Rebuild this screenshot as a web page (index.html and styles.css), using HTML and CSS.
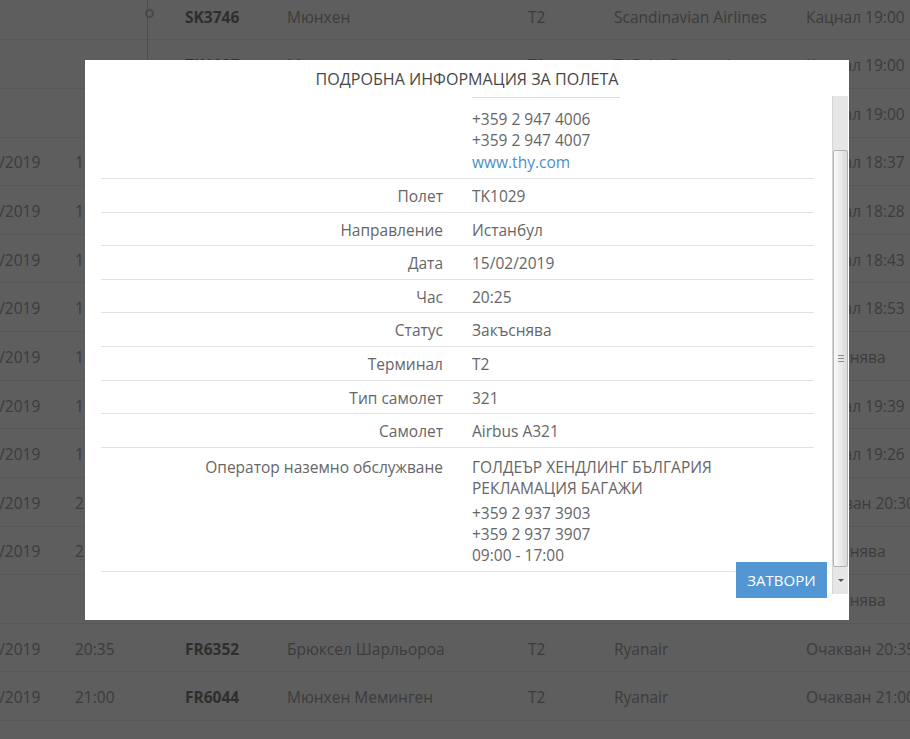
FILE: index.html
```html
<!DOCTYPE html>
<html lang="bg">
<head>
<meta charset="utf-8">
<title>Подробна информация за полета</title>
<link rel="stylesheet" href="styles.css">
</head>
<body>
<div class="board">
  <div class="flight-row"><span></span><span class="time"><i class="tl-line"></i><i class="tl-dot"></i></span><b>SK3746</b><span>Мюнхен</span><span>T2</span><span>Scandinavian Airlines</span><span>Кацнал 19:00</span></div>
  <div class="flight-row"><span></span><span class="time"><i class="tl-line"></i></span><b>TK1027</b><span>Мюнхен</span><span>T2</span><span>TAP Air Portugal</span><span>Кацнал 19:00</span></div>
  <div class="flight-row"><span></span><span class="time"><i class="tl-line"></i></span><b></b><span></span><span></span><span></span><span>Кацнал 19:00</span></div>
  <div class="flight-row"><span>15/02/2019</span><span class="time">1</span><b></b><span></span><span></span><span></span><span>Кацнал 18:37</span></div>
  <div class="flight-row"><span>15/02/2019</span><span class="time">1</span><b></b><span></span><span></span><span></span><span>Кацнал 18:28</span></div>
  <div class="flight-row"><span>15/02/2019</span><span class="time">1</span><b></b><span></span><span></span><span></span><span>Кацнал 18:43</span></div>
  <div class="flight-row"><span>15/02/2019</span><span class="time">1</span><b></b><span></span><span></span><span></span><span>Кацнал 18:53</span></div>
  <div class="flight-row"><span>15/02/2019</span><span class="time">1</span><b></b><span></span><span></span><span></span><span>Закъснява</span></div>
  <div class="flight-row"><span>15/02/2019</span><span class="time">1</span><b></b><span></span><span></span><span></span><span>Кацнал 19:39</span></div>
  <div class="flight-row"><span>15/02/2019</span><span class="time">1</span><b></b><span></span><span></span><span></span><span>Кацнал 19:26</span></div>
  <div class="flight-row"><span>15/02/2019</span><span class="time">2</span><b></b><span></span><span></span><span></span><span>Очакван 20:30</span></div>
  <div class="flight-row"><span>15/02/2019</span><span class="time">2</span><b></b><span></span><span></span><span></span><span>Закъснява</span></div>
  <div class="flight-row"><span></span><span class="time"></span><b></b><span></span><span></span><span></span><span>Закъснява</span></div>
  <div class="flight-row"><span>15/02/2019</span><span class="time">20:35</span><b>FR6352</b><span>Брюксел Шарльороа</span><span>T2</span><span>Ryanair</span><span>Очакван 20:35</span></div>
  <div class="flight-row"><span>15/02/2019</span><span class="time">21:00</span><b>FR6044</b><span>Мюнхен Меминген</span><span>T2</span><span>Ryanair</span><span>Очакван 21:00</span></div>
  <div class="flight-row"><span></span><span class="time"></span><b></b><span></span><span></span><span></span><span></span></div>
</div>

<div class="overlay"></div>

<div class="modal">
  <div class="modal-title">Подробна информация за полета</div>
  <div class="modal-body">
    <div class="details">
      <div class="info-row partial">
        <div class="info-label"></div>
        <div class="info-value">
          <div class="sep"></div>
          <div class="lines">
            <div>+359 2 947 4006</div>
            <div>+359 2 947 4007</div>
            <div><a href="#">www.thy.com</a></div>
          </div>
        </div>
      </div>
      <div class="info-row"><div class="info-label">Полет</div><div class="info-value">TK1029</div></div>
      <div class="info-row"><div class="info-label">Направление</div><div class="info-value">Истанбул</div></div>
      <div class="info-row"><div class="info-label">Дата</div><div class="info-value">15/02/2019</div></div>
      <div class="info-row"><div class="info-label">Час</div><div class="info-value">20:25</div></div>
      <div class="info-row"><div class="info-label">Статус</div><div class="info-value">Закъснява</div></div>
      <div class="info-row"><div class="info-label">Терминал</div><div class="info-value">T2</div></div>
      <div class="info-row"><div class="info-label">Тип самолет</div><div class="info-value">321</div></div>
      <div class="info-row"><div class="info-label">Самолет</div><div class="info-value">Airbus A321</div></div>
      <div class="info-row operator">
        <div class="info-label">Оператор наземно обслужване</div>
        <div class="info-value">
          <div>ГОЛДЕЪР ХЕНДЛИНГ БЪЛГАРИЯ</div>
          <div>РЕКЛАМАЦИЯ БАГАЖИ</div>
          <div class="phones">
            <div>+359 2 937 3903</div>
            <div>+359 2 937 3907</div>
            <div>09:00 - 17:00</div>
          </div>
        </div>
      </div>
    </div>
    <div class="scrollbar">
      <div class="thumb"><span class="grip"></span></div>
      <div class="arrow"><span class="tri"></span></div>
    </div>
  </div>
  <button class="close-btn" type="button">Затвори</button>
</div>
</body>
</html>
```
FILE: styles.css
```css
html, body {
  margin: 0;
  height: 100%;
  overflow: hidden;
}
body {
  position: relative;
  background: #fff;
  font-family: "Open Sans", "DejaVu Sans", sans-serif;
}

/* background flight board */
.board {
  margin: -8.3px 0 0 -42px;
  width: 960px;
}
.flight-row {
  display: grid;
  grid-template-columns: 117px 110px 102px 241px 86px 192px 1fr;
  align-items: center;
  height: 48.64px;
  box-sizing: border-box;
  padding-top: 2px;
  border-bottom: 1px solid #ebebeb;
  font-size: 15.5px;
  color: #a3a3a3;
  white-space: nowrap;
}
.flight-row b {
  font-weight: 700;
  color: #7e7e7e;
}
.time {
  position: relative;
  align-self: stretch;
  display: flex;
  align-items: center;
}
.tl-line {
  position: absolute;
  left: 72px;
  top: -4px;
  bottom: -2px;
  width: 1px;
  background: #d2d2d2;
}
.tl-dot {
  position: absolute;
  left: 70px;
  top: 15px;
  width: 5px;
  height: 5px;
  border: 2px solid #c4c4c4;
  border-radius: 50%;
  background: #fff;
}

.overlay {
  position: fixed;
  inset: 0;
  background: rgba(0, 0, 0, 0.63);
}

/* modal */
.modal {
  position: absolute;
  left: 85px;
  top: 60px;
  width: 764px;
  height: 560px;
  background: #fff;
  color: #666;
}
.modal-title {
  height: 36px;
  line-height: 38px;
  text-align: center;
  text-transform: uppercase;
  font-size: 16.1px;
  font-weight: 400;
  color: #474747;
}
.modal-body {
  display: flex;
  height: 498px;
}
.details {
  flex: 1;
  padding: 0 18px 0 16px;
  overflow: hidden;
  font-size: 15.5px;
}
.info-row {
  display: grid;
  grid-template-columns: 371px 1fr;
  padding: 7px 0 4.6px;
  line-height: 21px;
  border-bottom: 1px solid #e2e2e2;
}
.info-label {
  text-align: right;
  padding-right: 29px;
}
.info-row.partial {
  padding: 0 0 5px;
}
.sep {
  width: 148px;
  height: 1px;
  border-bottom: 1px solid #dedede;
}
.lines {
  margin-top: 10.5px;
  line-height: 21.5px;
}
.lines a {
  color: #4a8fc8;
  text-decoration: none;
}
.info-row.operator {
  padding: 9.5px 0 5px;
}
.phones {
  margin-top: 4px;
}

/* scrollbar */
.scrollbar {
  width: 16px;
  margin-right: 1px;
  box-sizing: border-box;
  display: flex;
  flex-direction: column;
  background: #e6e6e6;
  border-left: 1px solid #d6d6d6;
}
.thumb {
  margin-top: 54px;
  height: 417px;
  box-sizing: border-box;
  border: 1px solid #b2b2b2;
  border-radius: 2px;
  background: linear-gradient(90deg, #fbfbfb, #dadada);
  display: flex;
  align-items: center;
  justify-content: center;
}
.grip {
  width: 6px;
  height: 5px;
  border-top: 1px solid #8a8a8a;
  border-bottom: 1px solid #8a8a8a;
  position: relative;
}
.grip::after {
  content: "";
  position: absolute;
  left: 0;
  right: 0;
  top: 2px;
  height: 1px;
  background: #8a8a8a;
}
.arrow {
  flex: 1;
  display: flex;
  align-items: center;
  justify-content: center;
}
.tri {
  width: 0;
  height: 0;
  border-left: 3px solid transparent;
  border-right: 3px solid transparent;
  border-top: 3px solid #555;
}

.close-btn {
  position: absolute;
  left: 651px;
  top: 502px;
  width: 91px;
  height: 36px;
  border: none;
  padding: 0;
  background: #5297d3;
  color: #fff;
  font-family: inherit;
  font-size: 15px;
  text-transform: uppercase;
}
```
